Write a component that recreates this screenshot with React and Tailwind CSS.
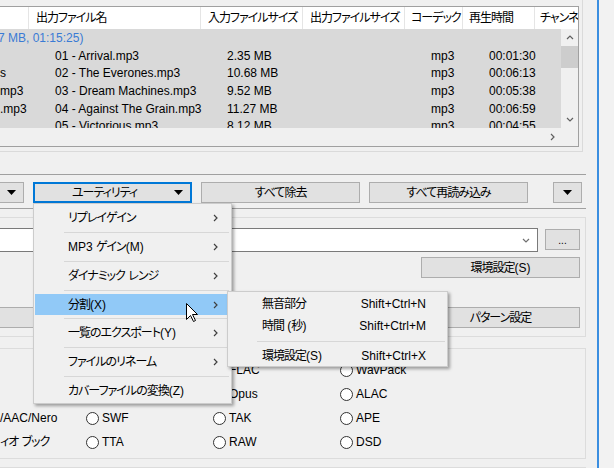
import React from "react";

// Japanese runs get tighter tracking so kana come closer to the narrow UI font
const J = ({ children }) => {
  if (typeof children !== "string") return children;
  const parts = children.split(/([\u3000-\u30ff\u4e00-\u9fff\uff00-\uffef]+)/);
  return parts.map((p, i) =>
    i % 2 === 1 ? (
      <span key={i} className="tracking-[-1px]">
        {p}
      </span>
    ) : (
      <React.Fragment key={i}>{p}</React.Fragment>
    )
  );
};

const Tri = () => (
  <svg width="9" height="5" viewBox="0 0 9 5">
    <polygon points="0,0 9,0 4.5,5" fill="#000" />
  </svg>
);

const Chev = ({ dir = "right", color = "#606060" }) => {
  if (dir === "right")
    return (
      <svg width="5" height="8" viewBox="0 0 5 8">
        <polyline points="1,1 4,4 1,7" fill="none" stroke={color} strokeWidth="1.2" />
      </svg>
    );
  if (dir === "up")
    return (
      <svg width="8" height="5" viewBox="0 0 8 5">
        <polyline points="1,4 4,1 7,4" fill="none" stroke={color} strokeWidth="1.2" />
      </svg>
    );
  return (
    <svg width="8" height="5" viewBox="0 0 8 5">
      <polyline points="1,1 4,4 7,1" fill="none" stroke={color} strokeWidth="1.2" />
    </svg>
  );
};

const rows = [
  { c1: "", name: "01 - Arrival.mp3", size: "2.35 MB", dur: "00:01:30" },
  { c1: "s", name: "02 - The Everones.mp3", size: "10.68 MB", dur: "00:06:13" },
  { c1: "mp3", name: "03 - Dream Machines.mp3", size: "9.52 MB", dur: "00:05:38" },
  { c1: ".mp3", name: "04 - Against The Grain.mp3", size: "11.27 MB", dur: "00:06:59" },
  { c1: "", name: "05 - Victorious.mp3", size: "8.12 MB", dur: "00:04:55" },
];

const radios = [
  ["", "MP3", "FLAC", "WavPack"],
  ["", "Ogg Vorbis", "Opus", "ALAC"],
  ["/AAC/Nero", "SWF", "TAK", "APE"],
  ["ィオ ブック", "TTA", "RAW", "DSD"],
];

const menuItems = [
  { label: "リプレイゲイン", sub: true },
  { label: "MP3 ゲイン(M)", sub: true },
  { label: "ダイナミック レンジ", sub: true },
  { label: "分割(X)", sub: true, active: true },
  { label: "一覧のエクスポート(Y)", sub: true },
  { label: "ファイルのリネーム", sub: true },
  { label: "カバーファイルの変換(Z)", sub: false },
];

const subItems = [
  { label: "無音部分", key: "Shift+Ctrl+N" },
  { label: "時間 (秒)", key: "Shift+Ctrl+M" },
  null,
  { label: "環境設定(S)", key: "Shift+Ctrl+X" },
];

const Radio = ({ label }) => (
  <div className="flex items-center">
    <div className="w-[13px] h-[13px] rounded-full border border-[#333] bg-white shrink-0" />
    <span className="ml-[3px] whitespace-nowrap">{label}</span>
  </div>
);

const Btn = ({ className = "", children }) => (
  <div
    className={`h-[21px] bg-[#e1e1e1] border border-[#adadad] flex items-center justify-center shrink-0 ${className}`}
  >
    {typeof children === "string" ? <J>{children}</J> : children}
  </div>
);

const headers = [
  { label: "出力ファイル名", w: "w-[172px] pl-[7px]" },
  { label: "入力ファイルサイズ", w: "w-[102px] pl-[7px]" },
  { label: "出力ファイルサイズ", w: "w-[102px] pl-[7px]" },
  { label: "コーデック", w: "w-[58px] pl-[6px]" },
  { label: "再生時間", w: "w-[72px] pl-[6px]" },
];

export default function App() {
  return (
    <div className="relative w-[614px] h-[468px] overflow-hidden bg-[#f0f0f0] flex text-[12px] text-black font-['Liberation_Sans','Noto_Sans_CJK_JP',sans-serif] [font-feature-settings:'palt']">
      {/* window client */}
      <div className="w-[597px] flex flex-col shrink-0">
        {/* list panel */}
        <div className="w-[583px] h-[152px] border-r border-b border-[#dadada] shrink-0">
          <div className="mt-[6px] w-[579px] h-[141px] border-t border-r border-b border-[#a0a0a0] flex flex-col">
            {/* header */}
            <div className="h-[22px] bg-white flex items-stretch whitespace-nowrap shrink-0">
              <div className="w-[29px] border-r border-[#e5e5e5]" />
              {headers.map((h) => (
                <div key={h.label} className={`${h.w} border-r border-[#e5e5e5] flex items-center overflow-hidden`}>
                  <J>{h.label}</J>
                </div>
              ))}
              <div className="flex-1 overflow-hidden pl-[5px] flex items-center">
                <J>チャンネル数</J>
              </div>
            </div>
            {/* body */}
            <div className="h-[99px] flex shrink-0">
              <div className="w-[561px] bg-[#d9d9d9] overflow-hidden whitespace-nowrap">
                <div className="h-[17.7px] flex items-center text-[#3a7bd5] -ml-[2px]">7 MB, 01:15:25)</div>
                {rows.map((r, i) => (
                  <div key={i} className="h-[17.7px] flex items-center">
                    <div className="w-[55px] overflow-hidden">{r.c1}</div>
                    <div className="w-[172px]">{r.name}</div>
                    <div className="w-[204px]">{r.size}</div>
                    <div className="w-[58px]">mp3</div>
                    <div>{r.dur}</div>
                  </div>
                ))}
              </div>
              <div className="w-[17px] flex flex-col bg-[#f0f0f0]">
                <div className="h-[17px] flex items-center justify-center">
                  <Chev dir="up" />
                </div>
                <div className="h-[22px] bg-[#cdcdcd]" />
                <div className="flex-1" />
                <div className="h-[17px] flex items-center justify-center">
                  <Chev dir="down" />
                </div>
              </div>
            </div>
            <div className="flex-1 flex">
              <div className="w-[561px] flex items-center justify-end pr-[6px]">
                <Chev dir="right" />
              </div>
              <div className="w-[17px]" />
            </div>
          </div>
        </div>

        {/* toolbar */}
        <div className="mt-[22px] w-[586px] h-px bg-[#a0a0a0] shrink-0" />
        <div className="mt-[7px] flex items-center shrink-0">
          <div className="w-[24px] h-[21px] bg-[#e1e1e1] border-t border-r border-b border-[#adadad] flex items-center justify-center">
            <Tri />
          </div>
          <div className="ml-[9px] w-[159px] h-[21px] bg-[#e1e1e1] border-2 border-[#0078d7] flex items-center">
            <span className="flex-1 text-center">
              <J>ユーティリティ</J>
            </span>
            <span className="mr-[7px] flex">
              <Tri />
            </span>
          </div>
          <Btn className="ml-[9px] w-[159px]">すべて除去</Btn>
          <Btn className="ml-[9px] w-[159px]">すべて再読み込み</Btn>
          <Btn className="ml-[25px] w-[29px]">
            <Tri />
          </Btn>
        </div>
        <div className="mt-[5px] w-[586px] h-px bg-[#a0a0a0] shrink-0" />

        {/* output panel */}
        <div className="mt-[8px] w-[586px] h-[120px] border-t border-r border-b border-[#dcdcdc] shrink-0">
          <div className="mt-[10px] flex items-start">
            <div className="w-[538px] h-[24px] bg-white border-t border-r border-b border-[#7a7a7a] flex items-center justify-end pr-[7px]">
              <Chev dir="down" color="#707070" />
            </div>
            <Btn className="ml-[7px] mt-[1px] w-[35px]">
              <span className="text-[10px] leading-none pt-[2px]">...</span>
            </Btn>
          </div>
          <Btn className="mt-[5px] ml-[421px] w-[159px]">環境設定(S)</Btn>
          <div className="mt-[29px] flex">
            <div className="w-[416px] h-[21px] bg-[#e1e1e1] border-t border-r border-b border-[#adadad]" />
            <Btn className="ml-[5px] w-[159px]">パターン設定</Btn>
          </div>
        </div>

        {/* format panel */}
        <div className="mt-[11px] w-[586px] h-[111px] border-t border-r border-b border-[#dcdcdc] pt-[9px] shrink-0">
          {radios.map((r, i) => (
            <div key={i} className="h-[24px] flex items-center whitespace-nowrap">
              <div className="w-[86px] overflow-hidden">
                <J>{r[0]}</J>
              </div>
              <div className="w-[127px]">
                <Radio label={r[1]} />
              </div>
              <div className="w-[127px]">
                <Radio label={r[2]} />
              </div>
              <div>
                <Radio label={r[3]} />
              </div>
            </div>
          ))}
        </div>
        <div className="mt-[8px] w-[586px] h-px bg-[#dcdcdc] shrink-0" />
      </div>

      {/* window border */}
      <div className="w-[2px] bg-[#3b8ee0] shrink-0" />
      <div className="flex-1 bg-[#f2f2f2]" />

      {/* utility menu */}
      <div className="absolute left-[33px] top-[203px] w-[199px] h-[201px] bg-[#f0f0f0] border border-[#cccccc] shadow-[2px_2px_3px_rgba(0,0,0,0.35)] flex flex-col">
        {menuItems.map((m, i) => (
          <React.Fragment key={i}>
            {i > 0 && <div className="ml-[30px] mr-[2px] h-px bg-[#d7d7d7] shrink-0" />}
            <div className="h-[27.86px] px-[1px] py-[3px] shrink-0">
              <div
                className={`h-full flex items-center pl-[33px] pr-[12px] ${m.active ? "bg-[#91c9f7]" : ""}`}
              >
                <span className="flex-1 whitespace-nowrap">
                  <J>{m.label}</J>
                </span>
                {m.sub && <Chev dir="right" color="#404040" />}
              </div>
            </div>
          </React.Fragment>
        ))}
      </div>

      {/* split submenu */}
      <div className="absolute left-[227px] top-[291px] w-[221px] h-[76px] bg-[#f0f0f0] border border-[#cccccc] shadow-[2px_2px_3px_rgba(0,0,0,0.35)] pt-[1px]">
        {subItems.map((s, i) =>
          s ? (
            <div key={i} className="h-[22px] flex items-center pl-[34px] pr-[21px]">
              <span className="flex-1">
                <J>{s.label}</J>
              </span>
              <span>{s.key}</span>
            </div>
          ) : (
            <div key={i} className="h-[8px] flex items-center">
              <div className="ml-[29px] mr-[2px] flex-1 h-px bg-[#d7d7d7]" />
            </div>
          )
        )}
      </div>

      {/* mouse pointer */}
      <svg className="absolute left-[186px] top-[303px]" width="13" height="20" viewBox="0 0 13 20">
        <path d="M0.5,0.5 L0.5,16.5 L4.5,12.5 L7.5,18.5 L9.5,17.5 L6.5,11.5 L11.5,11.5 Z" fill="#fff" stroke="#000" strokeWidth="1" />
      </svg>
    </div>
  );
}
